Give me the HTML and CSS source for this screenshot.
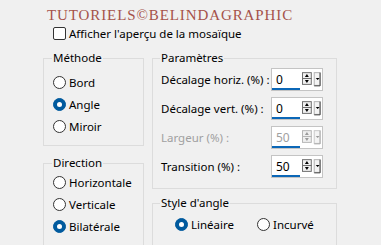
FILE: index.html
```html
<html lang="fr">
<head>
    <meta charset="UTF-8">
    <title>Mosaïque - Paramètres</title>
    <link rel="stylesheet" href="styles.css">
</head>
<body>
    <div class="dialog">
        <div class="brand">TUTORIELS©BELINDAGRAPHIC</div>

        <!-- Aperçu -->
        <div class="check"><span class="check-box"></span>Afficher l'aperçu de la mosaïque</div>

        <div class="panels">
            <div class="col col-left">
                <fieldset class="group group-method">
                    <legend>Méthode</legend>
                    <div class="radio"><span class="dot"></span>Bord</div>
                    <div class="radio"><span class="dot on"></span>Angle</div>
                    <div class="radio"><span class="dot"></span>Miroir</div>
                </fieldset>

                <fieldset class="group group-direction">
                    <legend>Direction</legend>
                    <div class="radio"><span class="dot"></span>Horizontale</div>
                    <div class="radio"><span class="dot"></span>Verticale</div>
                    <div class="radio"><span class="dot on"></span>Bilatérale</div>
                </fieldset>
            </div>

            <div class="col col-right">
                <fieldset class="group group-params">
                    <legend>Paramètres</legend>
                    <div class="field">
                        <span class="field-label">Décalage horiz. (%) :</span>
                        <div class="spin">
                            <span class="spin-value">0</span>
                            <svg class="spin-btns" width="20" height="15" viewBox="0 0 20 15">
                                <rect x="0.5" y="0.5" width="9" height="6" fill="#f0f0f0" stroke="#6d6d6d"/>
                                <rect x="0.5" y="6.5" width="9" height="6" fill="#f0f0f0" stroke="#6d6d6d"/>
                                <path d="M3 5h4L5 2z" fill="#000"/>
                                <path d="M3 8h4L5 11z" fill="#000"/>
                                <rect x="12.5" y="0.5" width="6" height="13" fill="#f4f4f4" stroke="#b0b0b0"/>
                                <path d="M18.5 0.5v13.5h-6" fill="none" stroke="#444"/>
                                <path d="M14 6h4l-2 2z" fill="#000"/>
                            </svg>
                        </div>
                    </div>
                    <div class="field">
                        <span class="field-label">Décalage vert. (%) :</span>
                        <div class="spin">
                            <span class="spin-value">0</span>
                            <svg class="spin-btns" width="20" height="15" viewBox="0 0 20 15">
                                <rect x="0.5" y="0.5" width="9" height="6" fill="#f0f0f0" stroke="#6d6d6d"/>
                                <rect x="0.5" y="6.5" width="9" height="6" fill="#f0f0f0" stroke="#6d6d6d"/>
                                <path d="M3 5h4L5 2z" fill="#000"/>
                                <path d="M3 8h4L5 11z" fill="#000"/>
                                <rect x="12.5" y="0.5" width="6" height="13" fill="#f4f4f4" stroke="#b0b0b0"/>
                                <path d="M18.5 0.5v13.5h-6" fill="none" stroke="#444"/>
                                <path d="M14 6h4l-2 2z" fill="#000"/>
                            </svg>
                        </div>
                    </div>
                    <div class="field disabled">
                        <span class="field-label">Largeur (%) :</span>
                        <div class="spin">
                            <span class="spin-value">50</span>
                            <svg class="spin-btns" width="20" height="15" viewBox="0 0 20 15">
                                <rect x="0.5" y="0.5" width="9" height="6" fill="#f0f0f0" stroke="#b5b5b5"/>
                                <rect x="0.5" y="6.5" width="9" height="6" fill="#f0f0f0" stroke="#b5b5b5"/>
                                <path d="M3 5h4L5 2z" fill="#9a9a9a"/>
                                <path d="M3 8h4L5 11z" fill="#9a9a9a"/>
                                <rect x="12.5" y="0.5" width="6" height="13" fill="#f4f4f4" stroke="#c8c8c8"/>
                                <path d="M18.5 0.5v13.5h-6" fill="none" stroke="#a8a8a8"/>
                                <path d="M14 6h4l-2 2z" fill="#9a9a9a"/>
                            </svg>
                        </div>
                    </div>
                    <div class="field">
                        <span class="field-label">Transition (%) :</span>
                        <div class="spin">
                            <span class="spin-value">50</span>
                            <svg class="spin-btns" width="20" height="15" viewBox="0 0 20 15">
                                <rect x="0.5" y="0.5" width="9" height="6" fill="#f0f0f0" stroke="#6d6d6d"/>
                                <rect x="0.5" y="6.5" width="9" height="6" fill="#f0f0f0" stroke="#6d6d6d"/>
                                <path d="M3 5h4L5 2z" fill="#000"/>
                                <path d="M3 8h4L5 11z" fill="#000"/>
                                <rect x="12.5" y="0.5" width="6" height="13" fill="#f4f4f4" stroke="#b0b0b0"/>
                                <path d="M18.5 0.5v13.5h-6" fill="none" stroke="#444"/>
                                <path d="M14 6h4l-2 2z" fill="#000"/>
                            </svg>
                        </div>
                    </div>
                </fieldset>

                <fieldset class="group group-style">
                    <legend>Style d'angle</legend>
                    <div class="radio-row">
                        <div class="radio radio-wide"><span class="dot on"></span>Linéaire</div>
                        <div class="radio"><span class="dot"></span>Incurvé</div>
                    </div>
                </fieldset>
            </div>
        </div>
    </div>
</body>
</html>
```

FILE: styles.css
```css
/* General Styling */
body {
    margin: 0;
    background-color: #f0f0f0;
    font-family: "Noto Sans", sans-serif;
    font-size: 11.5px;
    color: #000;
}

.dialog {
    width: 381px;
    height: 245px;
    overflow: hidden;
}

.brand {
    padding: 6px 0 0 47px;
    font-family: "Liberation Serif", serif;
    font-size: 15px;
    line-height: 18px;
    color: #a5524a;
    letter-spacing: 0.9px;
}

/* Checkbox */
.check {
    display: flex;
    align-items: center;
    gap: 3px;
    height: 16px;
    margin: 1px 0 0 53px;
}

.check-box {
    width: 11px;
    height: 11px;
    border: 1px solid #333;
    border-radius: 2px;
    background-color: #fff;
}

/* Group boxes */
.panels {
    display: flex;
    gap: 8px;
    margin: 10px 0 0 43px;
}

.col {
    display: flex;
    flex-direction: column;
}

.col-left {
    width: 101px;
    gap: 10px;
}

.col-right {
    width: 185px;
    gap: 7px;
}

.group {
    margin: 0;
    min-width: 0;
    border: 1px solid #dcdcdc;
    padding: 0 0 0 9px;
}

.group legend {
    padding: 0 1px;
    margin-left: -1px;
    line-height: 14px;
}

.group-method {
    padding-top: 6px;
    padding-bottom: 8px;
}

.group-direction {
    padding-top: 1px;
    padding-bottom: 20px;
}

.group-params {
    padding: 3px 8px 10px 8px;
}

.group-style {
    padding: 6px 8px 13px 8px;
}

/* Radios */
.radio {
    display: flex;
    align-items: center;
    gap: 3px;
    height: 22px;
}

.radio-row {
    display: flex;
    margin-left: 14px;
}

.radio-row .radio {
    height: 16px;
}

.radio-wide {
    width: 82px;
}

.dot {
    width: 11px;
    height: 11px;
    border: 1px solid #333;
    border-radius: 50%;
    background-color: #fff;
    position: relative;
}

.dot.on {
    border-color: #005a9e;
    background-color: #005a9e;
}

.dot.on::after {
    content: "";
    position: absolute;
    left: 3px;
    top: 3px;
    width: 5px;
    height: 5px;
    border-radius: 50%;
    background-color: #fff;
}

/* Spinners */
.field {
    display: flex;
    align-items: center;
    height: 23px;
    margin-bottom: 6px;
}

.field:last-child {
    margin-bottom: 0;
}

.field-label {
    width: 110px;
    flex-shrink: 0;
    white-space: nowrap;
}

.disabled {
    color: #a0a0a0;
}

.spin {
    display: flex;
    align-items: center;
    width: 50px;
    height: 21px;
    border: 1px solid #c4c4c4;
    background-color: #fff;
    position: relative;
}

.spin-value {
    width: 24px;
    padding-left: 4px;
    height: 21px;
    line-height: 21px;
    font-size: 12px;
}

.spin-value::after {
    content: "";
    position: absolute;
    left: 0;
    bottom: 0;
    width: 28px;
    height: 2px;
    background-color: #0b67b7;
}

.spin-btns {
    margin-left: 3px;
}
```
